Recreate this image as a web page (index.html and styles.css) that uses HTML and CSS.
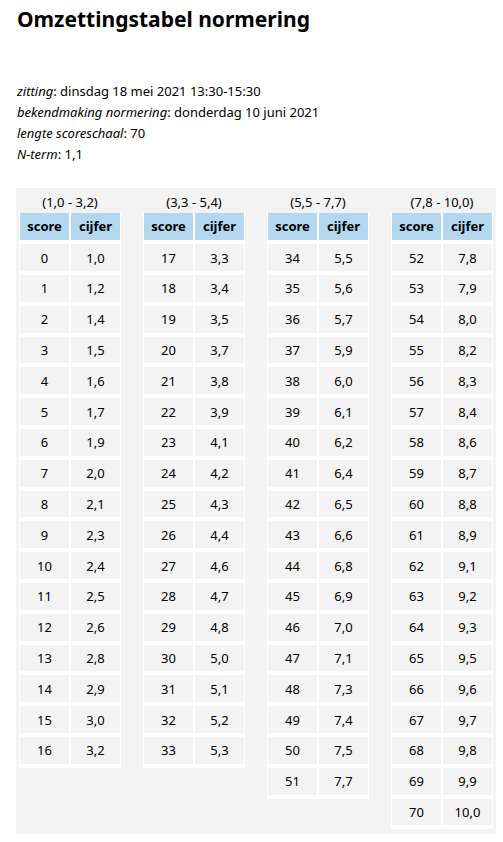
FILE: index.html
```html
<!DOCTYPE html>
<html lang="nl">
<head>
<meta charset="utf-8">
<title>Omzettingstabel normering</title>
<link rel="stylesheet" href="styles.css">
</head>
<body>
<div class="page">
  <h1 class="title">Omzettingstabel normering</h1>
  <div class="info">
    <p><em>zitting</em>: dinsdag 18 mei 2021 13:30-15:30</p>
    <p><em>bekendmaking normering</em>: donderdag 10 juni 2021</p>
    <p><em>lengte scoreschaal</em>: 70</p>
    <p><em>N-term</em>: 1,1</p>
  </div>
  <div class="tables">
    <div class="col">
      <div class="cap">(1,0 - 3,2)</div>
      <table class="tbl">
        <thead><tr><th>score</th><th>cijfer</th></tr></thead>
        <tbody>
          <tr><td>0</td><td>1,0</td></tr>
          <tr><td>1</td><td>1,2</td></tr>
          <tr><td>2</td><td>1,4</td></tr>
          <tr><td>3</td><td>1,5</td></tr>
          <tr><td>4</td><td>1,6</td></tr>
          <tr><td>5</td><td>1,7</td></tr>
          <tr><td>6</td><td>1,9</td></tr>
          <tr><td>7</td><td>2,0</td></tr>
          <tr><td>8</td><td>2,1</td></tr>
          <tr><td>9</td><td>2,3</td></tr>
          <tr><td>10</td><td>2,4</td></tr>
          <tr><td>11</td><td>2,5</td></tr>
          <tr><td>12</td><td>2,6</td></tr>
          <tr><td>13</td><td>2,8</td></tr>
          <tr><td>14</td><td>2,9</td></tr>
          <tr><td>15</td><td>3,0</td></tr>
          <tr><td>16</td><td>3,2</td></tr>
        </tbody>
      </table>
    </div>
    <div class="col">
      <div class="cap">(3,3 - 5,4)</div>
      <table class="tbl">
        <thead><tr><th>score</th><th>cijfer</th></tr></thead>
        <tbody>
          <tr><td>17</td><td>3,3</td></tr>
          <tr><td>18</td><td>3,4</td></tr>
          <tr><td>19</td><td>3,5</td></tr>
          <tr><td>20</td><td>3,7</td></tr>
          <tr><td>21</td><td>3,8</td></tr>
          <tr><td>22</td><td>3,9</td></tr>
          <tr><td>23</td><td>4,1</td></tr>
          <tr><td>24</td><td>4,2</td></tr>
          <tr><td>25</td><td>4,3</td></tr>
          <tr><td>26</td><td>4,4</td></tr>
          <tr><td>27</td><td>4,6</td></tr>
          <tr><td>28</td><td>4,7</td></tr>
          <tr><td>29</td><td>4,8</td></tr>
          <tr><td>30</td><td>5,0</td></tr>
          <tr><td>31</td><td>5,1</td></tr>
          <tr><td>32</td><td>5,2</td></tr>
          <tr><td>33</td><td>5,3</td></tr>
        </tbody>
      </table>
    </div>
    <div class="col">
      <div class="cap">(5,5 - 7,7)</div>
      <table class="tbl">
        <thead><tr><th>score</th><th>cijfer</th></tr></thead>
        <tbody>
          <tr><td>34</td><td>5,5</td></tr>
          <tr><td>35</td><td>5,6</td></tr>
          <tr><td>36</td><td>5,7</td></tr>
          <tr><td>37</td><td>5,9</td></tr>
          <tr><td>38</td><td>6,0</td></tr>
          <tr><td>39</td><td>6,1</td></tr>
          <tr><td>40</td><td>6,2</td></tr>
          <tr><td>41</td><td>6,4</td></tr>
          <tr><td>42</td><td>6,5</td></tr>
          <tr><td>43</td><td>6,6</td></tr>
          <tr><td>44</td><td>6,8</td></tr>
          <tr><td>45</td><td>6,9</td></tr>
          <tr><td>46</td><td>7,0</td></tr>
          <tr><td>47</td><td>7,1</td></tr>
          <tr><td>48</td><td>7,3</td></tr>
          <tr><td>49</td><td>7,4</td></tr>
          <tr><td>50</td><td>7,5</td></tr>
          <tr><td>51</td><td>7,7</td></tr>
        </tbody>
      </table>
    </div>
    <div class="col">
      <div class="cap">(7,8 - 10,0)</div>
      <table class="tbl">
        <thead><tr><th>score</th><th>cijfer</th></tr></thead>
        <tbody>
          <tr><td>52</td><td>7,8</td></tr>
          <tr><td>53</td><td>7,9</td></tr>
          <tr><td>54</td><td>8,0</td></tr>
          <tr><td>55</td><td>8,2</td></tr>
          <tr><td>56</td><td>8,3</td></tr>
          <tr><td>57</td><td>8,4</td></tr>
          <tr><td>58</td><td>8,6</td></tr>
          <tr><td>59</td><td>8,7</td></tr>
          <tr><td>60</td><td>8,8</td></tr>
          <tr><td>61</td><td>8,9</td></tr>
          <tr><td>62</td><td>9,1</td></tr>
          <tr><td>63</td><td>9,2</td></tr>
          <tr><td>64</td><td>9,3</td></tr>
          <tr><td>65</td><td>9,5</td></tr>
          <tr><td>66</td><td>9,6</td></tr>
          <tr><td>67</td><td>9,7</td></tr>
          <tr><td>68</td><td>9,8</td></tr>
          <tr><td>69</td><td>9,9</td></tr>
          <tr><td>70</td><td>10,0</td></tr>
        </tbody>
      </table>
    </div>
  </div>
</div>
</body>
</html>
```

FILE: styles.css
```css
html, body {
  margin: 0;
  padding: 0;
  background: #ffffff;
}
body {
  font-family: "Noto Sans", "Open Sans", sans-serif;
  color: #000000;
  font-size: 13px;
}
.page {
  padding: 4px 7px 0 16px;
}
.title {
  margin: 0;
  font-size: 21px;
  line-height: 30px;
  font-weight: 700;
  padding-left: 1px;
}
.info {
  margin-top: 47px;
  padding-left: 1px;
}
.info p {
  margin: 0;
  line-height: 21px;
}
.info em {
  font-style: italic;
}
.tables {
  margin-top: 23px;
  background: #f3f3f3;
  display: flex;
  align-items: flex-start;
  gap: 22px;
  padding: 4px 2px 5px 3px;
}
.col {
  width: 102px;
  display: flex;
  flex-direction: column;
}
.cap {
  text-align: center;
  line-height: 20px;
  height: 21px;
}
.tbl {
  width: 102px;
  border-collapse: separate;
  border-spacing: 0;
  table-layout: fixed;
}
.tbl th,
.tbl td {
  border-style: solid;
  border-color: #ffffff;
  border-width: 0 1px 4px 1px;
  text-align: center;
  padding: 0;
  font-size: 13px;
}
.tbl th {
  background: #b2d7ee;
  font-weight: 700;
  height: 27.3px;
  line-height: 27px;
}
.tbl td {
  background: #f3f3f3;
  height: 26.8px;
  line-height: 26px;
}
```
